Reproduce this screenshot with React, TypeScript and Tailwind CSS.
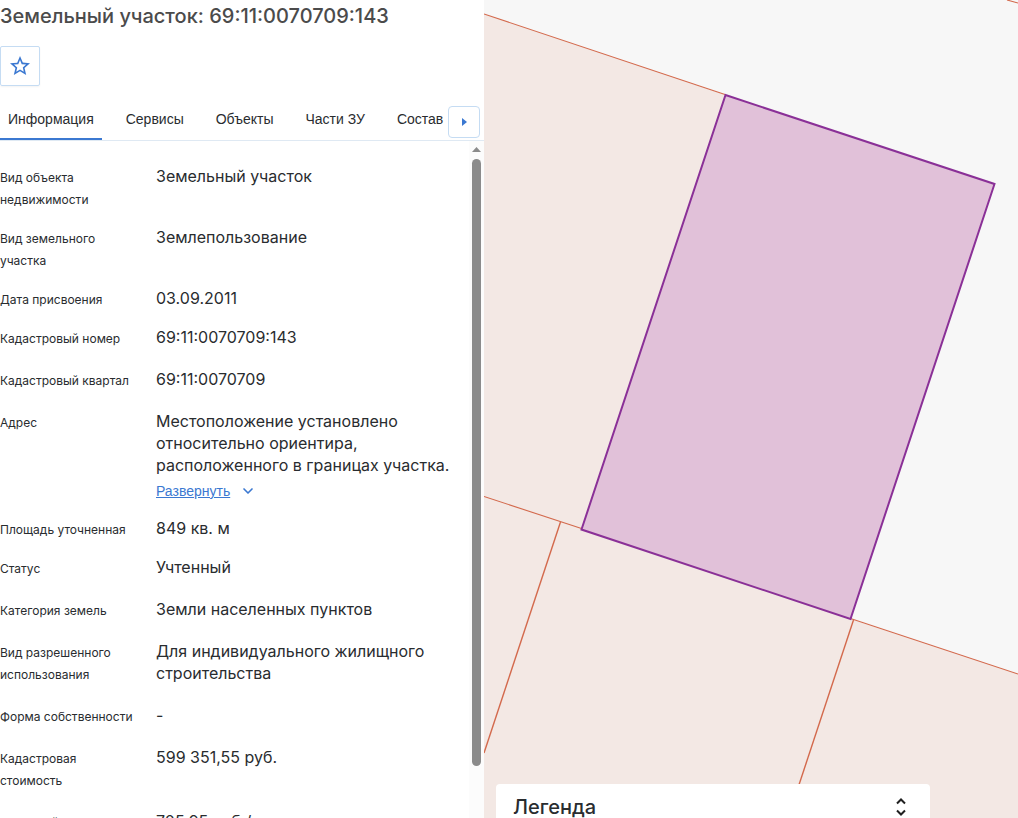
import { ChevronDown } from "lucide-react";
import clsx from "clsx";
import { useState } from "react";

interface Field {
    label: string;
    value: string;
    compact?: boolean;
    expandable?: boolean;
}

const TABS = ["Информация", "Сервисы", "Объекты", "Части ЗУ", "Состав"];

const FIELDS: Field[] = [
    { label: "Вид объекта недвижимости", value: "Земельный участок", compact: true },
    { label: "Вид земельного участка", value: "Землепользование", compact: true },
    { label: "Дата присвоения", value: "03.09.2011", compact: true },
    { label: "Кадастровый номер", value: "69:11:0070709:143" },
    { label: "Кадастровый квартал", value: "69:11:0070709" },
    {
        label: "Адрес",
        value: "Местоположение установлено относительно ориентира, расположенного в границах участка.",
        compact: true,
        expandable: true,
    },
    { label: "Площадь уточненная", value: "849 кв. м", compact: true },
    { label: "Статус", value: "Учтенный" },
    { label: "Категория земель", value: "Земли населенных пунктов" },
    { label: "Вид разрешенного использования", value: "Для индивидуального жилищного строительства" },
    { label: "Форма собственности", value: "-" },
    { label: "Кадастровая стоимость", value: "599 351,55 руб." },
    { label: "Удельный показатель кадастровой стоимости", value: "705,95 руб./кв. м" },
];

function FieldRow({ label, value, compact, expandable }: Field) {
    return (
        <div className={clsx("flex", compact ? "pb-[15px]" : "pb-[18px]")}>
            <dt className="w-[156px] shrink-0 pt-0.5 pr-5 text-xs leading-[22px]">{label}</dt>
            <dd className="min-w-0 flex-1 text-base leading-[22px]">
                {value}
                {expandable && (
                    <button
                        type="button"
                        className="mt-1 flex items-center gap-2.5 font-['Liberation_Sans',sans-serif] text-sm leading-[22px] text-[#3b78d1]"
                    >
                        <span className="underline">Развернуть</span>
                        <ChevronDown className="size-4" strokeWidth={2.5} />
                    </button>
                )}
            </dd>
        </div>
    );
}

function ParcelMap() {
    return (
        <svg
            className="block h-full w-full"
            viewBox="0 0 534 818"
            preserveAspectRatio="xMinYMin slice"
            role="img"
            aria-label="Карта"
        >
            {/* Neighbouring parcels */}
            <g fill="#f3e8e4">
                <path d="M0 14 L241.500 95 L97.500 529 L366.500 619 L534 674 V818 H0 Z" />
            </g>
            <g fill="none" stroke="#d3694c" strokeWidth="1.1">
                <path d="M0 14 L241 94.500" />
                <path d="M0 496.500 L97.500 528.500" />
                <path d="M366.500 618.500 L534 674" />
                <path d="M76.500 522 L0 753" strokeWidth="1.400" />
                <path d="M369.500 620 L304 818" strokeWidth="1.400" />
                <path d="M523 0 L534 3" />
            </g>
            {/* Selected parcel */}
            <path
                d="M241.500 95 L510.500 184 L366.500 619 L97.500 529.500 Z"
                fill="#e1c1d9"
                stroke="#8a3097"
                strokeWidth="2"
            />
        </svg>
    );
}

export default function App() {
    const [tab, setTab] = useState(TABS[0]);

    return (
        <div className="flex h-screen overflow-hidden bg-white font-['Inter',sans-serif] text-[#292c2f]">
            <aside className="flex w-[484px] shrink-0 flex-col">
                <h1 className="pt-1 text-xl leading-6 font-medium text-[#4b4b4b]">
                    Земельный участок: 69:11:0070709:143
                </h1>

                <button
                    type="button"
                    aria-label="В избранное"
                    className="mt-[18px] flex size-10 shrink-0 items-center justify-center rounded-xs border border-[#c5dcf3] shadow-xs"
                >
                    <svg className="size-6" viewBox="0 0 24 24" fill="#3b78d1">
                        <path d="M22 9.240l-7.190-.620L12 2 9.190 8.630 2 9.240l5.460 4.730L5.820 21 12 17.270 18.180 21l-1.630-7.030L22 9.240zM12 15.400l-3.760 2.270 1-4.280-3.320-2.880 4.380-.380L12 6.100l1.710 4.040 4.380.380-3.320 2.880 1 4.280L12 15.400z" />
                    </svg>
                </button>

                {/* Tabs */}
                <div className="mt-3 flex h-[43px] shrink-0 border-b border-[#dfe9f3]">
                    <div role="tablist" className="flex min-w-0 flex-1 gap-4 overflow-hidden">
                        {TABS.map((name) => (
                            <button
                                key={name}
                                type="button"
                                role="tab"
                                aria-selected={tab === name}
                                onClick={() => setTab(name)}
                                className={clsx(
                                    "shrink-0 border-b-2 px-2 pt-0.5 font-['Liberation_Sans',sans-serif] text-sm",
                                    tab === name ? "border-[#3b78d1]" : "border-transparent"
                                )}
                            >
                                {name}
                            </button>
                        ))}
                    </div>
                    <button
                        type="button"
                        aria-label="Следующие вкладки"
                        className="mt-2 mr-1 flex size-8 items-center justify-center rounded-sm border border-[#c5dcf3]"
                    >
                        <svg className="h-2 w-[5px]" viewBox="0 0 5 8" fill="#3b78d1">
                            <path d="M0 0 L5 4 L0 8 Z" />
                        </svg>
                    </button>
                </div>

                <div className="flex min-h-0 flex-1">
                    <dl className="min-w-0 flex-1 overflow-y-auto pt-6 pr-4 [scrollbar-width:none]">
                        {FIELDS.map((field) => (
                            <FieldRow key={field.label} {...field} />
                        ))}
                    </dl>

                    {/* Scrollbar */}
                    <div className="flex w-[15px] shrink-0 flex-col items-center bg-[#fcfcfc] pt-1.5" aria-hidden="true">
                        <svg className="h-[5px] w-[9px] shrink-0" viewBox="0 0 9 5" fill="#8b8b8b">
                            <path d="M0 5 L4.500 0 L9 5 Z" />
                        </svg>
                        <div className="mt-[7px] mb-[52px] w-[9px] flex-1 rounded-full bg-[#8b8b8b]" />
                    </div>
                </div>
            </aside>

            <main className="relative min-w-0 flex-1 overflow-hidden bg-[#f7f7f7]">
                <ParcelMap />
                <button
                    type="button"
                    className="absolute right-[88px] bottom-0 left-3 flex h-[34px] items-center justify-between rounded-t-sm bg-white pt-3 pr-[23px] pl-[17px] text-xl leading-6 font-medium"
                >
                    Легенда
                    <svg
                        className="h-[18px] w-3"
                        viewBox="0 0 12 18"
                        fill="none"
                        stroke="#202020"
                        strokeWidth="2"
                    >
                        <path d="M2 5.500 L6 1.500 L10 5.500" />
                        <path d="M2 12.500 L6 16.500 L10 12.500" />
                    </svg>
                </button>
            </main>
        </div>
    );
}
